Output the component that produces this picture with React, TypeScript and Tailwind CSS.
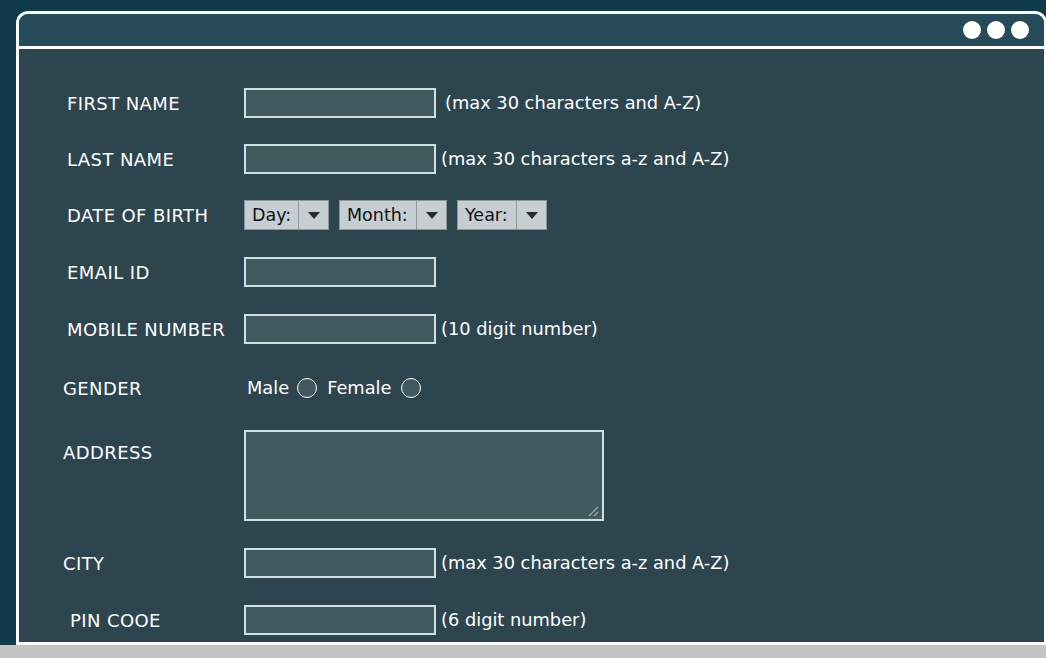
import React from "react";

const font = { fontFamily: '"DejaVu Sans", sans-serif' };

function TextBox({ w = "w-[192px]" }: { w?: string }) {
  return <div className={`${w} h-[30px] shrink-0 border-2 border-[#cfe0e5] bg-[#42595f]`} />;
}

function Hint({ children, ml = "ml-[5px]" }: { children: React.ReactNode; ml?: string }) {
  return <span className={`${ml} text-[17.8px] tracking-normal`}>{children}</span>;
}

function Select({ label, w }: { label: string; w: string }) {
  return (
    <div className={`flex h-[30px] ${w} items-stretch border border-[#8d979b] bg-[#c6ced2] text-[17.5px] tracking-normal text-[#111]`}>
      <span className="flex flex-1 items-center pl-[7px]">{label}</span>
      <span className="flex w-[30px] items-center justify-center border-l border-[#8d979b]">
        <svg width="12" height="7" viewBox="0 0 12 7">
          <path d="M0 0h12L6 7z" fill="#2a2a2a" />
        </svg>
      </span>
    </div>
  );
}

function Radio({ className = "" }: { className?: string }) {
  return <span className={`inline-block h-[20px] w-[20px] shrink-0 rounded-full border-[1.5px] border-white bg-[#42595f] ${className}`} />;
}

function Row({
  label,
  labelPad = "pl-[67px]",
  className = "",
  children,
}: {
  label: string;
  labelPad?: string;
  className?: string;
  children: React.ReactNode;
}) {
  return (
    <div className={`flex items-center ${className}`}>
      <span className={`w-[244px] shrink-0 ${labelPad}`}>{label}</span>
      {children}
    </div>
  );
}

export default function App() {
  return (
    <div className="flex h-[658px] w-[1046px] flex-col overflow-hidden bg-[#0f3a4a] text-[18px] tracking-[0.4px] text-white" style={font}>
      <div className="ml-[16px] mt-[11px] flex flex-1 flex-col overflow-hidden rounded-tl-[12px] rounded-tr-[12px] border-l-[3px] border-t-[3px] border-r-[3px] border-white -mr-[1px]">
        {/* title bar */}
        <div className="flex h-[32px] shrink-0 items-center justify-end gap-[6px] bg-[#264c5b] pr-[15px]">
          <span className="h-[18px] w-[18px] rounded-full bg-white" />
          <span className="h-[18px] w-[18px] rounded-full bg-white" />
          <span className="h-[18px] w-[18px] rounded-full bg-white" />
        </div>
        <div className="h-[3px] shrink-0 bg-white" />
        {/* body */}
        <div className="-mr-[3px] flex flex-1 flex-col bg-[#2d454f] pt-[39px]">
          <div className="ml-[-19px]">
            <Row label="FIRST NAME">
              <TextBox />
              <Hint ml="ml-[9px]">(max 30 characters and A-Z)</Hint>
            </Row>
            <Row label="LAST NAME" className="mt-[26px]">
              <TextBox />
              <Hint>(max 30 characters a-z and A-Z)</Hint>
            </Row>
            <Row label="DATE OF BIRTH" className="mt-[26px]">
              <div className="flex gap-[10px]">
                <Select label="Day:" w="w-[85px]" />
                <Select label="Month:" w="w-[108px]" />
                <Select label="Year:" w="w-[90px]" />
              </div>
            </Row>
            <Row label="EMAIL ID" className="mt-[27px]">
              <TextBox />
            </Row>
            <Row label="MOBILE NUMBER" className="mt-[27px]">
              <TextBox />
              <Hint>(10 digit number)</Hint>
            </Row>
            <Row label="GENDER" labelPad="pl-[63px]" className="mt-[29px] h-[30px]">
              <div className="ml-[3px] flex items-center text-[17.8px] tracking-normal">
                <span>Male</span>
                <Radio className="ml-[8px]" />
                <span className="ml-[10px]">Female</span>
                <Radio className="ml-[10px]" />
              </div>
            </Row>
            <div className="mt-[27px] flex items-start">
              <span className="w-[244px] shrink-0 pl-[63px] pt-[9px]">ADDRESS</span>
              <div className="relative h-[91px] w-[360px] border-2 border-[#cfe0e5] bg-[#42595f]">
                <svg className="absolute bottom-[2px] right-[3px]" width="12" height="12" viewBox="0 0 12 12">
                  <path d="M11 2L2 11M11 7L7 11" stroke="#9aa6aa" strokeWidth="1.3" />
                </svg>
              </div>
            </div>
            <Row label="CITY" labelPad="pl-[63px]" className="mt-[27px]">
              <TextBox />
              <Hint>(max 30 characters a-z and A-Z)</Hint>
            </Row>
            <Row label="PIN COOE" labelPad="pl-[70px]" className="mt-[27px]">
              <TextBox />
              <Hint>(6 digit number)</Hint>
            </Row>
          </div>
        </div>
        <div className="h-[3px] shrink-0 bg-white" />
      </div>
      <div className="h-[13px] shrink-0 bg-[#c4c4c4]" />
    </div>
  );
}
